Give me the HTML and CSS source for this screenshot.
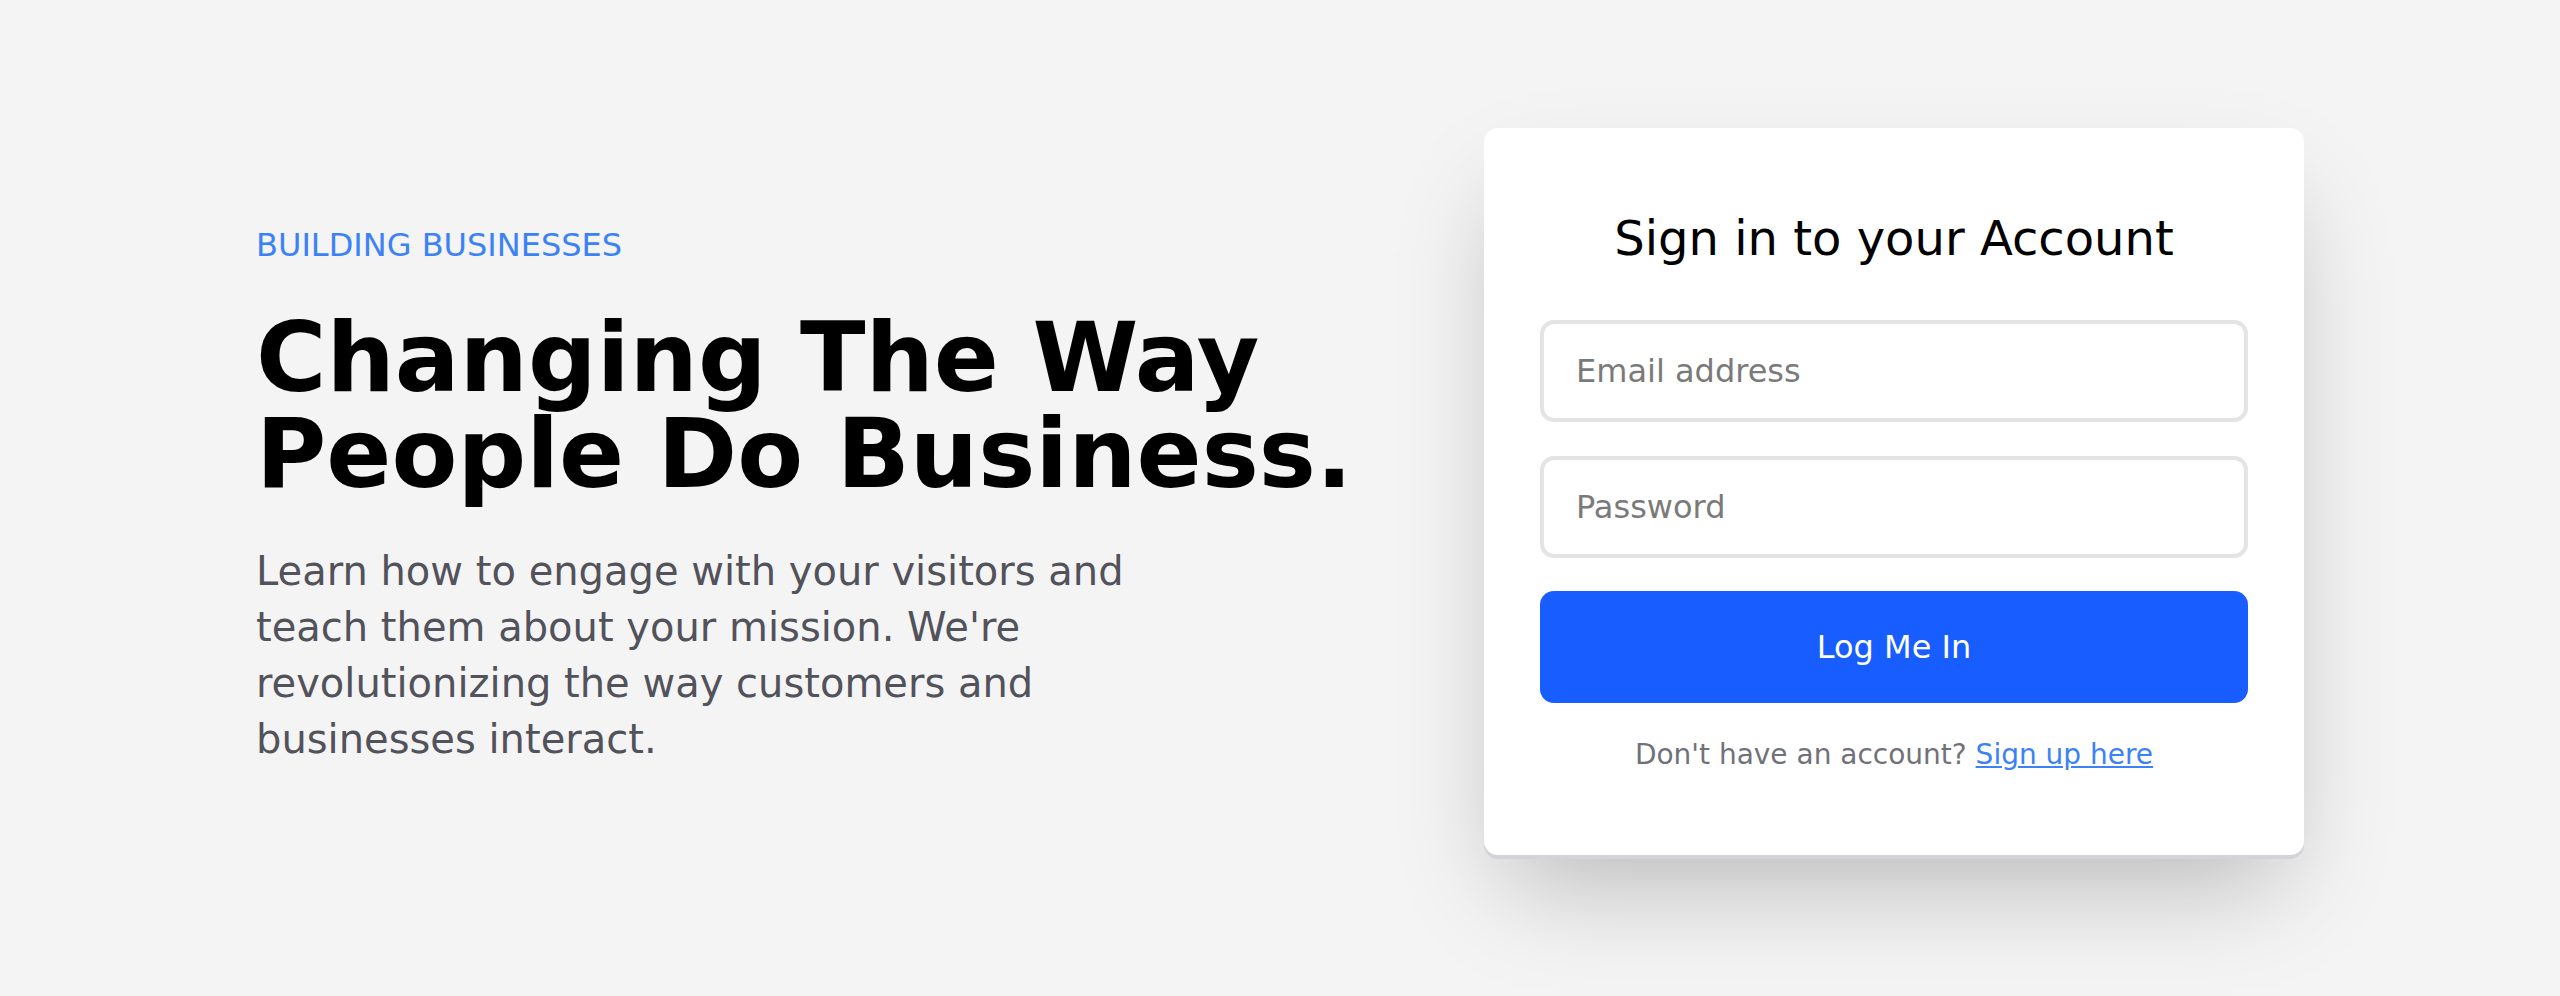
FILE: index.html
```html
<!DOCTYPE html>
<html lang="en">
<head>
  <meta charset="UTF-8">
  <meta name="viewport" content="width=device-width, initial-scale=1.0">
  <title>Sign in</title>
  <link rel="stylesheet" href="styles.css">
</head>
<body>
  <main class="hero">
    <div class="hero-inner">
      <!-- Intro copy -->
      <section class="intro">
        <p class="eyebrow">BUILDING BUSINESSES</p>
        <h1 class="headline">Changing The Way People Do Business.</h1>
        <p class="lead">Learn how to engage with your visitors and teach them about your mission. We're revolutionizing the way customers and businesses interact.</p>
      </section>

      <!-- Sign in card -->
      <div class="card">
        <h2 class="card-title">Sign in to your Account</h2>
        <form class="login-form" onsubmit="return false;">
          <input type="email" class="field" placeholder="Email address">
          <input type="password" class="field" placeholder="Password">
          <button type="submit" class="login-btn">Log Me In</button>
        </form>
        <p class="signup">Don't have an account? <a href="#">Sign up here</a></p>
      </div>
    </div>
  </main>
</body>
</html>
```

FILE: styles.css
```css
* {
  margin: 0;
  padding: 0;
  box-sizing: border-box;
}

body {
  font-family: 'DejaVu Sans', 'Liberation Sans', sans-serif;
  background: #f4f4f5;
  color: #000;
}

.hero {
  min-height: 100vh;
  display: flex;
  align-items: center;
  justify-content: center;
  padding-bottom: 13px;
}

.hero-inner {
  width: 2048px;
  display: flex;
  align-items: center;
}

/* Intro copy */
.intro {
  flex: 1;
  padding-top: 4px;
}

.eyebrow {
  font-size: 32px;
  line-height: 48px;
  color: #3b82f6;
  margin-bottom: 41px;
}

.headline {
  font-size: 96px;
  line-height: 96px;
  font-weight: 700;
  margin-bottom: 41px;
}

.lead {
  max-width: 896px;
  font-size: 40px;
  line-height: 56px;
  color: #52525b;
}

/* Sign in card */
.card {
  width: 820px;
  background: #fff;
  border-radius: 14px;
  padding: 78px 56px 80px;
  box-shadow:
    0 4px 0 #d4d4d8,
    0 50px 100px -24px rgba(0, 0, 0, 0.25);
}

.card-title {
  font-size: 48px;
  line-height: 64px;
  font-weight: 400;
  text-align: center;
  margin-bottom: 50px;
}

.login-form {
  display: flex;
  flex-direction: column;
}

.field {
  width: 100%;
  height: 102px;
  padding: 0 32px;
  border: 4px solid #e4e4e7;
  border-radius: 14px;
  font-family: inherit;
  font-size: 32px;
  color: #18181b;
  background: #fff;
  outline: none;
}

.field + .field {
  margin-top: 34px;
}

.field::placeholder {
  color: #7a7a7a;
}

.login-btn {
  margin-top: 33px;
  height: 112px;
  width: 100%;
  border: none;
  border-radius: 14px;
  background: #175dff;
  color: #fff;
  font-family: inherit;
  font-size: 32px;
  cursor: pointer;
}

.signup {
  margin-top: 32px;
  font-size: 28px;
  line-height: 40px;
  text-align: center;
  color: #71717a;
}

.signup a {
  color: #3b82f6;
  text-decoration: underline;
}
```
